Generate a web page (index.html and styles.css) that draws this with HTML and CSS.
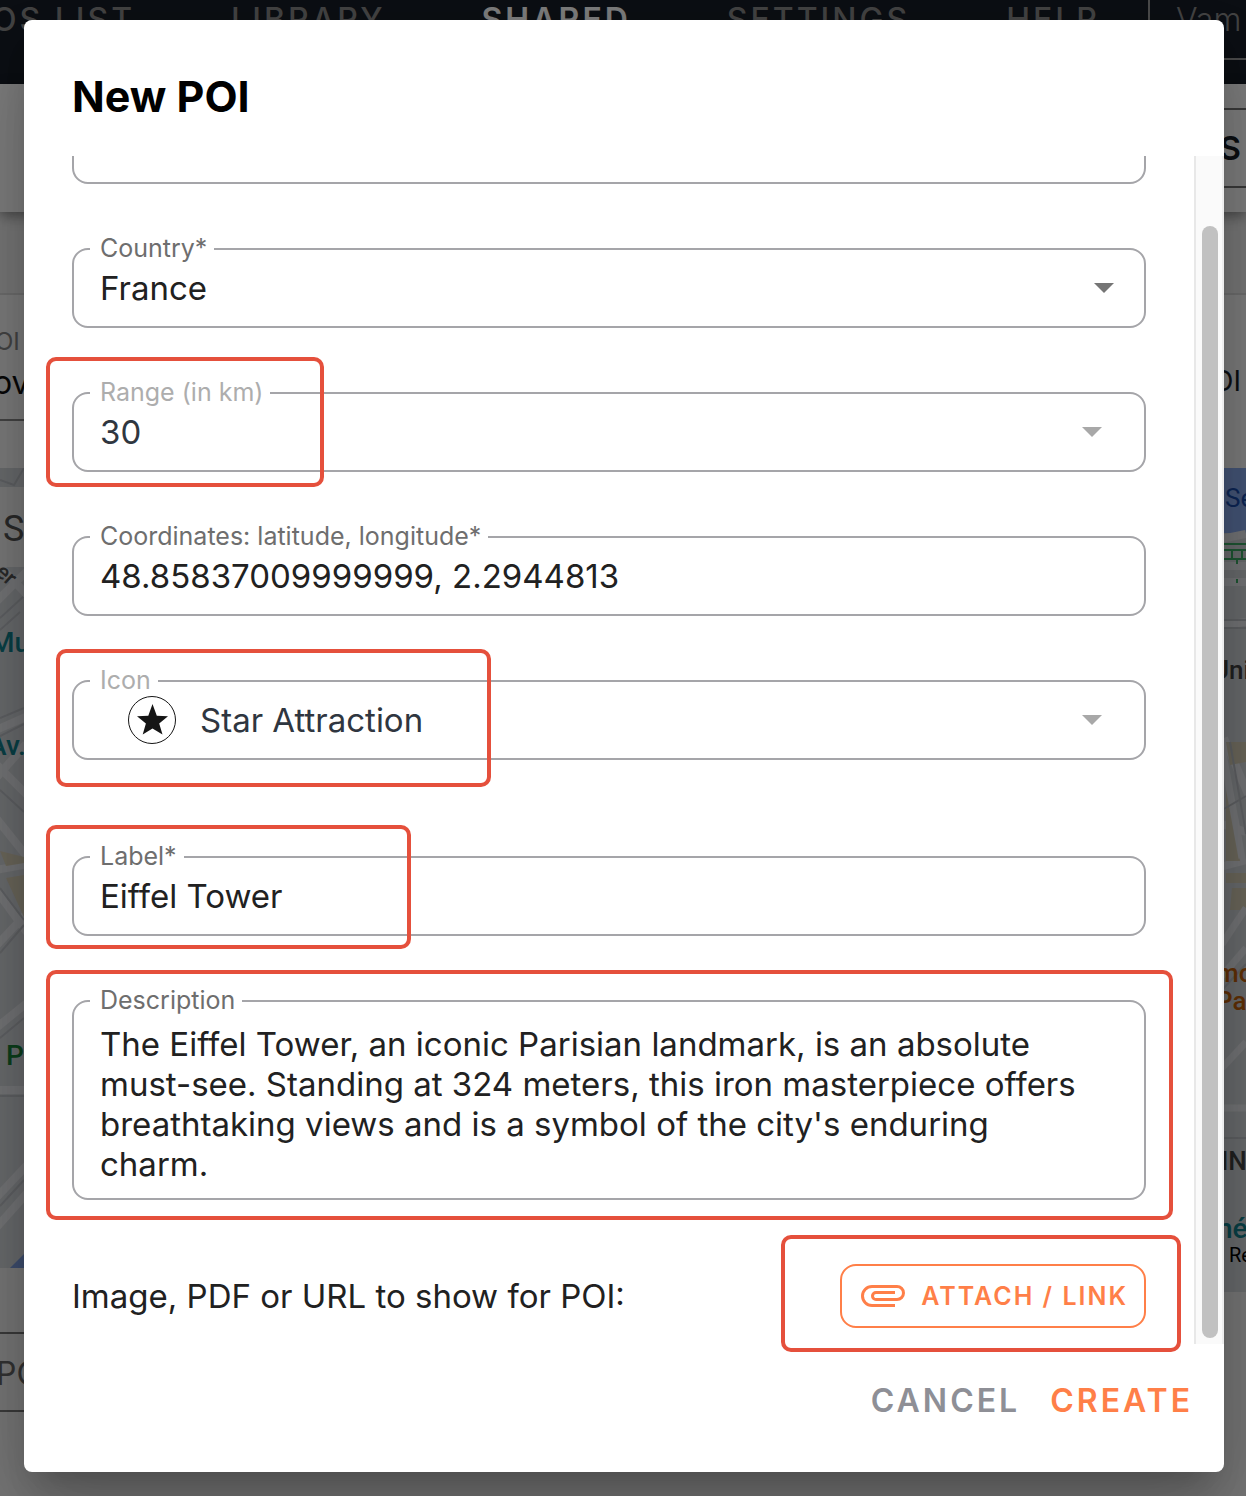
FILE: index.html
```html
<!DOCTYPE html>
<html lang="en">
<head>
    <meta charset="UTF-8">
    <meta name="viewport" content="width=device-width, initial-scale=1.0">
    <title>New POI</title>
    <link rel="stylesheet" href="styles.css">
</head>
<body>
    <!-- Page behind the dialog -->
    <div class="page" aria-hidden="true">
        <nav class="navbar">
            <span class="nav-item">OS LIST</span>
            <span class="nav-item">LIBRARY</span>
            <span class="nav-item active">SHARED</span>
            <span class="nav-item">SETTINGS</span>
            <span class="nav-item">HELP</span>
            <span class="nav-user">Vam</span>
        </nav>
        <div class="toolbar">
            <span class="toolbar-button">S</span>
        </div>
        <div class="columns">
            <div class="column">
                <div class="column-head">
                    <span class="column-label">OI</span>
                    <span class="column-value">ov</span>
                </div>
                <svg class="map" width="100" height="800" viewBox="0 0 100 800">
                    <rect width="100" height="800" fill="#d5d8dd"/>
                    <path d="M0 12l14 5L24 0M0 150L24 128M0 162l20-18M0 250l24-10M0 268l24-12M0 300l24 20M0 322l24 22" stroke="#bfc2c8" stroke-width="2" fill="none"/>
                    <path d="M-4 134L28 102M-4 94l32 34M-4 262l32-14M-4 310L26 276M-4 296l32 32M-4 350l32 40M-4 402l32-6M-4 422l32 44M-4 478l32-34M-4 560l32-26M-4 622h32M-4 730l32-34M-4 760l32-36" stroke="#e9ebee" stroke-width="8" fill="none"/>
                    <path d="M0 383l24 6v6L6 398zM6 410l18-3v42z" fill="#d8d0b8"/>
                    <path d="M0 420l24 32M0 485l24-28M0 628h24M0 570l24-20M0 738l24-26" stroke="#bfc2c8" stroke-width="2" fill="none"/>
                    <path d="M10 800l14-14v14z" fill="#7f9fe0"/>
                    <rect y="19" width="100" height="80" fill="#f4f4f4"/>
                    <text x="3" y="73" class="map-search">S</text>
                    <text x="-6" y="110" class="map-road" transform="rotate(42 0 108)">er</text>
                    <text x="-10" y="184" class="map-teal">Mu</text>
                    <text x="-12" y="287" class="map-teal">Av.</text>
                    <text x="6" y="597" class="map-green">P</text>
                </svg>
                <div class="column-foot">PO</div>
            </div>
            <div class="column column-right">
                <div class="column-head">
                    <span class="column-value column-value-right">OI</span>
                </div>
                <svg class="map" width="100" height="824" viewBox="0 0 100 824">
                    <rect width="100" height="824" fill="#d5d8dd"/>
                    <rect width="100" height="65" fill="#8aacf0"/>
                    <path d="M70 72l30-6M70 98h30M70 114h30M70 158l30-4M70 354l30 10M70 400l30-8M78 270l30 70" stroke="#e9ebee" stroke-width="8" fill="none"/>
                    <path d="M70 76h30M70 82h30M70 91h30M86 82v9M96 82v9M91 91v5M91 111v4" stroke="#3fae68" stroke-width="2" fill="none"/>
                    <path d="M80 274h20v20l-16 3zM80 305l14 88H80zM80 405h20v10H80zM86 420h14v22H84z" fill="#d8d0b8"/>
                    <path d="M76 280l20 110M100 480l-24 28M100 440l-24 36M76 600l24-26M76 640h24" stroke="#e9ebee" stroke-width="7" fill="none"/>
                    <path d="M76 152h24M76 160h24M76 342l24-14M84 274l16 92M76 522l24-26M76 670h24" stroke="#bfc2c8" stroke-width="2" fill="none"/>
                    <text x="79" y="39" class="map-blue">Sé</text>
                    <text x="66" y="211" class="map-dark">Uni</text>
                    <text x="70" y="514" class="map-orange">mo</text>
                    <text x="70" y="542" class="map-orange">Pa</text>
                    <text x="75" y="702" class="map-street">IN</text>
                    <text x="71" y="770" class="map-teal">hé</text>
                    <text x="83" y="794" class="map-note">Re</text>
                </svg>
            </div>
        </div>
    </div>

    <!-- New POI dialog -->
    <div class="overlay">
        <form class="dialog" role="dialog" aria-labelledby="dialog-title">
            <h1 id="dialog-title">New POI</h1>

            <div class="dialog-body">
                <div class="fields">
                    <div class="field-cut">
                        <div class="field">
                            <input type="text" aria-label="Address">
                        </div>
                    </div>

                    <div class="field">
                        <label for="country">Country*</label>
                        <select id="country">
                            <option>France</option>
                        </select>
                        <span class="caret"></span>
                    </div>

                    <div class="field disabled">
                        <label for="range">Range (in km)</label>
                        <select id="range" disabled>
                            <option>30</option>
                        </select>
                        <span class="caret"></span>
                        <span class="highlight highlight-range"></span>
                    </div>

                    <div class="field">
                        <label for="coordinates">Coordinates: latitude, longitude*</label>
                        <input type="text" id="coordinates" value="48.85837009999999, 2.2944813">
                    </div>

                    <div class="field disabled with-icon">
                        <label for="icon">Icon</label>
                        <svg class="star" width="48" height="48" viewBox="0 0 48 48">
                            <circle cx="24" cy="24" r="23.5" fill="#fff" stroke="#151515"/>
                            <path d="M24.5 8l4.3 11.8L40 20.2l-8.8 7.4L34.5 38.5l-10-6-9.8 6 3.2-10.9L9 20.2l11.3-.4z" fill="#151515"/>
                        </svg>
                        <select id="icon" disabled>
                            <option>Star Attraction</option>
                        </select>
                        <span class="caret"></span>
                        <span class="highlight highlight-icon"></span>
                    </div>

                    <div class="field field-label">
                        <label for="label">Label*</label>
                        <input type="text" id="label" value="Eiffel Tower">
                        <span class="highlight highlight-label"></span>
                    </div>

                    <div class="field">
                        <label for="description">Description</label>
                        <textarea id="description" rows="4">The Eiffel Tower, an iconic Parisian landmark, is an absolute must-see. Standing at 324 meters, this iron masterpiece offers breathtaking views and is a symbol of the city's enduring charm.</textarea>
                        <span class="highlight highlight-description"></span>
                    </div>

                    <div class="attach-row">
                        <span>Image, PDF or URL to show for POI:</span>
                        <div class="attach">
                            <button type="button" class="attach-button">
                                <svg width="44" height="22" viewBox="0 0 44 22" fill="none" stroke="currentColor" stroke-width="3">
                                    <path d="M34 20.5H11A9.5 9.5 0 0 1 11 1.5H36A6.5 6.5 0 0 1 36 14.5H15A3.5 3.5 0 0 1 15 7.5H34"/>
                                </svg>
                                ATTACH / LINK
                            </button>
                            <span class="highlight highlight-attach"></span>
                        </div>
                    </div>
                </div>
                <div class="scrollbar">
                    <div class="scrollbar-thumb"></div>
                </div>
            </div>

            <div class="actions">
                <button type="button" class="cancel">CANCEL</button>
                <button type="submit" class="create">CREATE</button>
            </div>
        </form>
    </div>
</body>
</html>
```
FILE: styles.css
```css
* {
    box-sizing: border-box;
    margin: 0;
    padding: 0;
}
body {
    position: relative;
    font-family: Inter, "Liberation Sans", sans-serif;
    font-size: 33px;
    color: #212121;
}
input, select, textarea, button {
    font-family: inherit;
    font-size: inherit;
    color: inherit;
    border: none;
    background: none;
}

/* Page behind the dialog */
.page {
    position: absolute;
    inset: 0;
    overflow: hidden;
    background-color: #f0f0f0;
}
.navbar {
    display: flex;
    height: 84px;
    margin-left: -8px;
    background-color: #181e28;
    color: #888;
    font-size: 32px;
    font-weight: 500;
    line-height: 40px;
    letter-spacing: 3px;
    white-space: nowrap;
}
.nav-item {
    margin-right: 96px;
}
.nav-item:nth-child(5) {
    margin-right: 48px;
}
.nav-item.active {
    color: #fff;
    font-weight: 600;
}
.nav-user {
    flex: 1;
    height: 60px;
    padding-left: 26px;
    border-left: 2px solid #999;
    border-bottom: 2px solid #999;
    font-weight: 300;
    letter-spacing: 0;
}
.toolbar {
    position: relative;
    display: flex;
    justify-content: flex-end;
    align-items: center;
    height: 128px;
    background-color: #fff;
    box-shadow: 0 4px 12px rgba(0, 0, 0, 0.4);
}
.toolbar-button {
    width: 200px;
    padding-right: 5px;
    border: 2px solid #777;
    border-right: none;
    color: #181e28;
    font-weight: 600;
    line-height: 76px;
    text-align: right;
}
.columns {
    display: flex;
    justify-content: space-between;
    padding-top: 81px;
}
.column {
    width: 100px;
}
.column-head {
    display: flex;
    flex-direction: column;
    height: 175px;
    padding-top: 32px;
    border-top: 2px solid #ddd;
    background-color: #fafafa;
}
.column-label {
    margin-left: -5px;
    color: #888;
    font-size: 24px;
    line-height: 30px;
}
.column-value {
    height: 64px;
    border-bottom: 2px solid #888;
    color: #111;
    font-size: 32px;
    line-height: 52px;
    text-indent: -7px;
}
.column-value-right {
    padding-right: 5px;
    border: none;
    color: #181e28;
    font-size: 28px;
    line-height: 108px;
    text-align: right;
}
.column-foot {
    height: 80px;
    margin-top: 64px;
    border-top: 2px solid #777;
    border-bottom: 2px solid #777;
    color: #666;
    font-size: 32px;
    line-height: 80px;
    text-indent: -4px;
}
.map {
    display: block;
    font-family: Roboto, sans-serif;
    font-size: 28px;
    font-weight: 500;
}
.map-search {
    fill: #555;
    font-size: 36px;
    font-weight: 400;
}
.map-road {
    fill: #555;
    font-size: 22px;
}
.map-teal {
    fill: #12838f;
}
.map-green {
    fill: #188038;
}
.map-blue {
    fill: #1a4fae;
    font-size: 26px;
    font-weight: 400;
}
.map-dark {
    fill: #444;
    font-size: 26px;
}
.map-orange {
    fill: #c5620c;
    font-size: 26px;
}
.map-street {
    fill: #444;
    font-size: 26px;
}
.map-note {
    fill: #000;
    font-size: 20px;
    font-weight: 400;
}

/* Dialog */
.overlay {
    position: relative;
    min-height: 100vh;
    padding: 20px 22px 24px 24px;
    background-color: rgba(0, 0, 0, 0.5);
}
.dialog {
    border-radius: 8px;
    background-color: #fff;
    box-shadow: 0 22px 30px -14px rgba(0, 0, 0, 0.2),
        0 48px 76px 6px rgba(0, 0, 0, 0.14),
        0 18px 92px 16px rgba(0, 0, 0, 0.12);
}
h1 {
    padding: 44px 48px 28px;
    color: #000;
    font-size: 43px;
    font-weight: 700;
    line-height: 64px;
}
.dialog-body {
    display: flex;
}
.fields {
    display: flex;
    flex: 1;
    flex-direction: column;
    gap: 64px;
    padding: 0 48px 16px;
}
.field {
    position: relative;
    display: flex;
    align-items: center;
    width: 100%;
    min-height: 80px;
    border: 2px solid #a5a5a9;
    border-radius: 16px;
}
/* The first field is scrolled halfway out */
.field-cut {
    display: flex;
    align-items: flex-end;
    height: 28px;
    overflow: hidden;
}
.field-label {
    margin-top: 32px;
}
.field label {
    position: absolute;
    top: -17px;
    left: 16px;
    padding: 0 7px 0 10px;
    background-color: #fff;
    color: #6e6e6e;
    font-size: 25px;
    line-height: 30px;
}
.field input, .field select {
    flex: 1;
    min-width: 0;
    height: 76px;
    padding: 0 26px;
    appearance: none;
}
.field textarea {
    flex: 1;
    height: 196px;
    padding: 22px 54px 14px 26px;
    line-height: 40px;
    resize: none;
    overflow: hidden;
}
.field input, .field select, .field textarea {
    outline: none;
}
.caret {
    margin-right: 30px;
    border: 10px solid transparent;
    border-top-color: #757575;
    border-bottom: none;
    pointer-events: none;
}
.disabled label {
    color: #adadad;
}
.disabled select {
    color: #2f3640;
    opacity: 1;
}
.disabled .caret {
    margin-right: 42px;
    border-top-color: #a8a8a8;
}
.with-icon .star {
    margin-left: 54px;
}
.with-icon select {
    padding-left: 24px;
}
.attach-row {
    display: flex;
    justify-content: space-between;
    align-items: center;
}
.attach {
    position: relative;
}
.attach-button {
    display: flex;
    align-items: center;
    gap: 16px;
    height: 64px;
    padding: 0 16px 0 19px;
    border: 2px solid #ff7f48;
    border-radius: 16px;
    color: #ff7f48;
    font-size: 25px;
    font-weight: 600;
    letter-spacing: 2px;
    cursor: pointer;
}
.scrollbar {
    width: 30px;
    padding: 70px 4px 6px 6px;
    border-left: 2px solid #e8e8e8;
    border-right: 2px solid #ededed;
    background-color: #fafafa;
}
.scrollbar-thumb {
    height: 100%;
    border-radius: 8px;
    background-color: #c1c1c1;
}
.actions {
    display: flex;
    justify-content: flex-end;
    gap: 30px;
    padding: 24px 31px 40px;
}
.actions button {
    height: 64px;
    font-size: 32px;
    font-weight: 600;
    letter-spacing: 3px;
    cursor: pointer;
}
.actions .cancel {
    color: #8e8f96;
}
.actions .create {
    color: #ff7f48;
}

/* Red frames around the important fields */
.highlight {
    position: absolute;
    border: 4px solid #e5503c;
    border-radius: 10px;
    pointer-events: none;
}
.highlight-range {
    top: -37px;
    bottom: -17px;
    left: -28px;
    width: 278px;
}
.highlight-icon {
    top: -33px;
    bottom: -29px;
    left: -18px;
    width: 435px;
}
.highlight-label {
    top: -33px;
    bottom: -15px;
    left: -28px;
    width: 365px;
}
.highlight-description {
    top: -32px;
    right: -29px;
    bottom: -22px;
    left: -28px;
}
.highlight-attach {
    top: -29px;
    right: -35px;
    bottom: -24px;
    left: -59px;
}
```
